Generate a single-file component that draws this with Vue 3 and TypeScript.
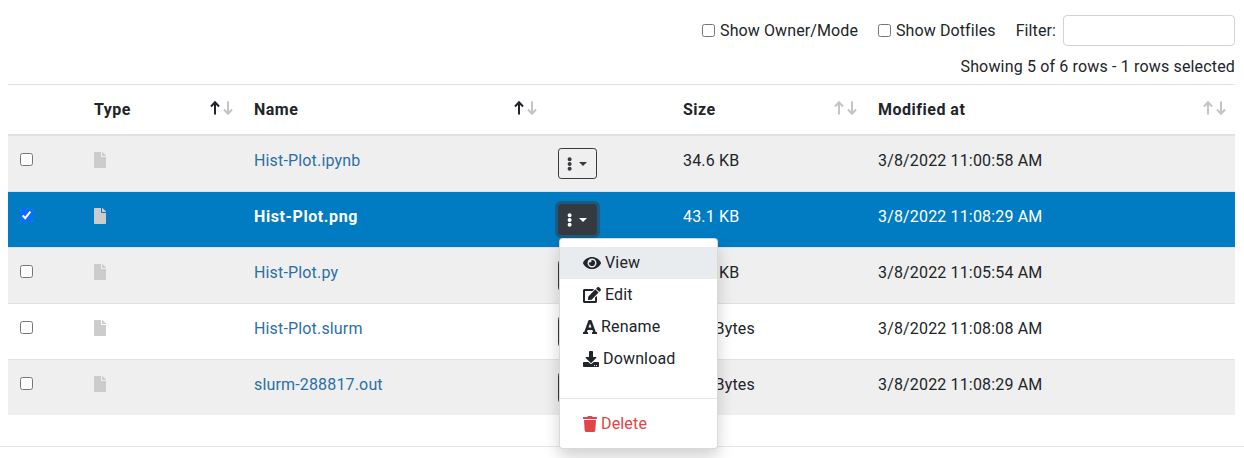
<script setup lang="ts">
interface FileRow {
  name: string
  size: string
  modified: string
  selected?: boolean
}

const files: FileRow[] = [
  { name: 'Hist-Plot.ipynb', size: '34.6 KB', modified: '3/8/2022 11:00:58 AM' },
  { name: 'Hist-Plot.png', size: '43.1 KB', modified: '3/8/2022 11:08:29 AM', selected: true },
  { name: 'Hist-Plot.py', size: '10.4 KB', modified: '3/8/2022 11:05:54 AM' },
  { name: 'Hist-Plot.slurm', size: '415 Bytes', modified: '3/8/2022 11:08:08 AM' },
  { name: 'slurm-288817.out', size: '258 Bytes', modified: '3/8/2022 11:08:29 AM' },
]

const columns = [
  { label: 'Type', active: true },
  { label: 'Name', active: true },
  { label: '', active: false },
  { label: 'Size', active: false },
  { label: 'Modified at', active: false },
]

const menu = [
  { label: 'View', box: '0 0 576 512', w: 18, hover: true, d: 'M572.52 241.4C518.29 135.59 410.93 64 288 64S57.68 135.64 3.48 241.41a32.35 32.35 0 0 0 0 29.19C57.71 376.41 165.07 448 288 448s230.32-71.64 284.52-177.41a32.35 32.35 0 0 0 0-29.19zM288 400a144 144 0 1 1 144-144 143.93 143.93 0 0 1-144 144zm0-240a95.31 95.31 0 0 0-25.31 3.79 47.85 47.85 0 0 1-66.9 66.9A95.78 95.78 0 1 0 288 160z' },
  { label: 'Edit', box: '0 0 576 512', w: 18, hover: false, d: 'M402.6 83.2l90.2 90.2c3.8 3.8 3.8 10 0 13.8L274.4 405.6l-92.8 10.3c-12.4 1.4-22.9-9.1-21.5-21.5l10.3-92.8L388.8 83.2c3.8-3.8 10-3.8 13.8 0zm162-22.9l-48.8-48.8c-15.2-15.2-39.9-15.2-55.2 0l-35.4 35.4c-3.8 3.8-3.8 10 0 13.8l90.2 90.2c3.8 3.8 10 3.8 13.8 0l35.4-35.4c15.2-15.3 15.2-40 0-55.2zM384 346.2V448H64V128h229.8c3.2 0 6.2-1.3 8.5-3.5l40-40c7.6-7.6 2.2-20.5-8.5-20.5H48C21.5 64 0 85.5 0 112v352c0 26.5 21.5 48 48 48h352c26.5 0 48-21.5 48-48V306.2c0-10.7-12.9-16-20.5-8.5l-40 40c-2.2 2.3-3.5 5.3-3.5 8.5z' },
  { label: 'Rename', box: '0 0 448 512', w: 14, hover: false, d: 'M432 416h-23.41L277.88 53.69A32 32 0 0 0 247.58 32h-47.16a32 32 0 0 0-30.3 21.69L39.41 416H16a16 16 0 0 0-16 16v32a16 16 0 0 0 16 16h128a16 16 0 0 0 16-16v-32a16 16 0 0 0-16-16h-19.58l23.3-64h152.56l23.3 64H304a16 16 0 0 0-16 16v32a16 16 0 0 0 16 16h128a16 16 0 0 0 16-16v-32a16 16 0 0 0-16-16zM176.85 272L224 142.51 271.15 272z' },
  { label: 'Download', box: '0 0 512 512', w: 16, hover: false, d: 'M216 0h80c13.3 0 24 10.7 24 24v168h87.7c17.8 0 26.7 21.5 14.1 34.1L269.7 378.3c-7.5 7.5-19.8 7.5-27.3 0L90.1 226.1c-12.6-12.6-3.7-34.1 14.1-34.1H192V24c0-13.3 10.7-24 24-24zm296 376v112c0 13.3-10.7 24-24 24H24c-13.3 0-24-10.7-24-24V376c0-13.3 10.7-24 24-24h146.7l49 49c20.1 20.1 52.5 20.1 72.6 0l49-49H488c13.3 0 24 10.7 24 24zm-124 88c0-11-9-20-20-20s-20 9-20 20 9 20 20 20 20-9 20-20zm64 0c0-11-9-20-20-20s-20 9-20 20 9 20 20 20 20-9 20-20z' },
]

const filePath = 'M224 136V0H24C10.7 0 0 10.7 0 24v464c0 13.3 10.7 24 24 24h336c13.3 0 24-10.7 24-24V160H248c-13.2 0-24-10.8-24-24zm160-14.1v6.1H256V0h6.1c6.4 0 12.5 2.5 17 7l97.9 98c4.5 4.5 7 10.6 7 16.9z'
const dotsPath = 'M96 184c39.8 0 72 32.2 72 72s-32.2 72-72 72-72-32.2-72-72 32.2-72 72-72zM24 80c0 39.8 32.2 72 72 72s72-32.2 72-72S135.8 8 96 8 24 40.2 24 80zm0 352c0 39.8 32.2 72 72 72s72-32.2 72-72-32.2-72-72-72-72 32.2-72 72z'
const trashPath = 'M432 32H312l-9.4-18.7A24 24 0 0 0 281.1 0H166.8a23.72 23.72 0 0 0-21.4 13.3L136 32H16A16 16 0 0 0 0 48v32a16 16 0 0 0 16 16h416a16 16 0 0 0 16-16V48a16 16 0 0 0-16-16zM53.2 467a48 48 0 0 0 47.9 45h245.8a48 48 0 0 0 47.9-45L416 128H32z'
</script>

<template>
  <div class="page">
    <div class="toolbar">
      <label class="check"><input type="checkbox" /> Show Owner/Mode</label>
      <label class="check"><input type="checkbox" /> Show Dotfiles</label>
      <label class="filter">Filter: <input type="text" class="filter-input" /></label>
    </div>
    <div class="info">Showing 5 of 6 rows - 1 rows selected</div>

    <table class="files">
      <colgroup>
        <col style="width: 74px" />
        <col style="width: 160px" />
        <col style="width: 304px" />
        <col style="width: 125px" />
        <col style="width: 195px" />
        <col />
      </colgroup>
      <thead>
        <tr>
          <th></th>
          <th v-for="col in columns" :key="col.label">
            <div v-if="col.label" class="th-inner">
              <span class="th-label">{{ col.label }}</span>
              <svg class="sort" viewBox="0 0 23 16" width="23" height="16" aria-hidden="true">
                <path fill="none" stroke-width="2" :stroke="col.active ? '#212529' : '#c4c4c4'" d="M5 14.5V2M1 6.5L5 2.2l4 4.3" />
                <path fill="none" stroke="#c4c4c4" stroke-width="2" d="M18 1.5V14M14 9.5l4 4.3 4-4.3" />
              </svg>
            </div>
          </th>
        </tr>
      </thead>
      <tbody>
        <tr v-for="file in files" :key="file.name" :class="{ selected: file.selected }">
          <td><input type="checkbox" class="row-check" :checked="file.selected" /></td>
          <td>
            <svg class="file-icon" viewBox="0 0 384 512" width="12" height="16" aria-hidden="true">
              <path fill="#ccc" :d="filePath" />
            </svg>
          </td>
          <td class="cell-text"><a class="file-link">{{ file.name }}</a></td>
          <td class="actions">
            <button type="button" class="toggle">
              <svg viewBox="0 0 192 512" width="5.25" height="14" aria-hidden="true">
                <path fill="currentColor" :d="dotsPath" />
              </svg>
              <span class="caret"></span>
            </button>
            <ul v-if="file.selected" class="menu">
              <li v-for="item in menu" :key="item.label" class="menu-item" :class="{ hover: item.hover }">
                <svg :viewBox="item.box" :width="item.w" height="16" aria-hidden="true">
                  <path fill="currentColor" :d="item.d" />
                </svg>
                {{ item.label }}
              </li>
              <li class="menu-blank"></li>
              <li class="menu-divider"></li>
              <li class="menu-item danger">
                <svg viewBox="0 0 448 512" width="14" height="16" aria-hidden="true">
                  <path fill="currentColor" :d="trashPath" />
                </svg>
                Delete
              </li>
            </ul>
          </td>
          <td class="cell-text">{{ file.size }}</td>
          <td class="cell-text">{{ file.modified }}</td>
        </tr>
      </tbody>
    </table>
    <div class="footer-line"></div>
  </div>
</template>

<style>
html,
body {
  margin: 0;
  overflow: hidden;
  background: #fff;
}
</style>

<style scoped>
.page {
  height: 458px;
  box-sizing: border-box;
  padding: 15px 9px 0 8px;
  font-family: Roboto, "Liberation Sans", sans-serif;
  font-size: 16px;
  line-height: 24px;
  letter-spacing: 0.16px;
  color: #212529;
}

.toolbar {
  display: flex;
  justify-content: flex-end;
  align-items: center;
  gap: 20px;
  height: 31px;
  letter-spacing: 0.1px;
}

.check {
  display: flex;
  align-items: center;
  gap: 5px;
}

.check input {
  margin: 0;
  width: 13px;
  height: 13px;
}

.filter {
  display: flex;
  align-items: center;
  gap: 7px;
}

.filter-input {
  width: 172px;
  height: 31px;
  box-sizing: border-box;
  border: 1px solid #ced4da;
  border-radius: 4px;
  background: #fff;
}

.info {
  margin-top: 9px;
  margin-bottom: 5px;
  text-align: right;
}

.files {
  width: 1227px;
  table-layout: fixed;
  border-collapse: collapse;
}

.files th {
  padding: 12px;
  border-top: 1px solid #dee2e6;
  border-bottom: 2px solid #dee2e6;
  text-align: left;
  font-weight: 700;
}

.th-inner {
  display: flex;
  justify-content: space-between;
  margin-right: -3px;
}

.th-label {
  letter-spacing: 0.5px;
  padding-top: 1px;
}

.sort {
  margin-top: 3px;
}

.files td {
  padding: 12px;
  border-top: 1px solid #dee2e6;
  height: 31px;
  vertical-align: top;
}

.files td.cell-text {
  padding-top: 13px;
  padding-bottom: 11px;
}

.files tbody tr:first-child td {
  border-top: 0;
}

.files tbody tr:nth-child(odd) {
  background: #efefef;
}

.files tr.selected {
  background: #017cc2;
  color: #fff;
}

.row-check {
  margin: 5px 0 0;
  width: 13px;
  height: 13px;
  accent-color: #0a6cff;
}

.file-icon {
  display: block;
  margin-top: 4px;
}

.file-link {
  color: #2a70a8;
}

.selected .file-link {
  color: #fff;
  font-weight: 700;
  letter-spacing: 0.6px;
}

.actions {
  position: relative;
}

.toggle {
  display: flex;
  align-items: center;
  gap: 7px;
  width: 39px;
  height: 31px;
  padding: 0 8px;
  box-sizing: border-box;
  border: 1px solid #343a40;
  border-radius: 3.2px;
  background: transparent;
  color: #343a40;
  font-size: 14px;
}

.selected .toggle {
  background: #343a40;
  color: #fff;
  box-shadow: 0 0 0 3px rgba(52, 58, 64, 0.5);
}

.caret {
  width: 0;
  height: 0;
  border-top: 4.5px solid currentColor;
  border-left: 4.5px solid transparent;
  border-right: 4.5px solid transparent;
}

.menu {
  position: absolute;
  z-index: 10;
  top: 46px;
  left: 13px;
  width: 159px;
  box-sizing: border-box;
  margin: 0;
  padding: 8px 0;
  list-style: none;
  background: #fff;
  border: 1px solid rgba(0, 0, 0, 0.15);
  border-radius: 4px;
  box-shadow: 0 8px 16px rgba(0, 0, 0, 0.18);
  color: #212529;
}

.menu-item {
  display: flex;
  align-items: center;
  gap: 4px;
  height: 32px;
  padding: 0 23px;
}

.menu-item.hover {
  background: #e9ecef;
}

.menu-blank {
  height: 15px;
}

.menu-divider {
  height: 1px;
  margin: 8px 0 9px;
  background: #e4e6e8;
}

.danger {
  color: #df4549;
}

.footer-line {
  position: absolute;
  left: 0;
  right: 0;
  top: 446px;
  height: 1px;
  background: #e5e5e5;
}
</style>
